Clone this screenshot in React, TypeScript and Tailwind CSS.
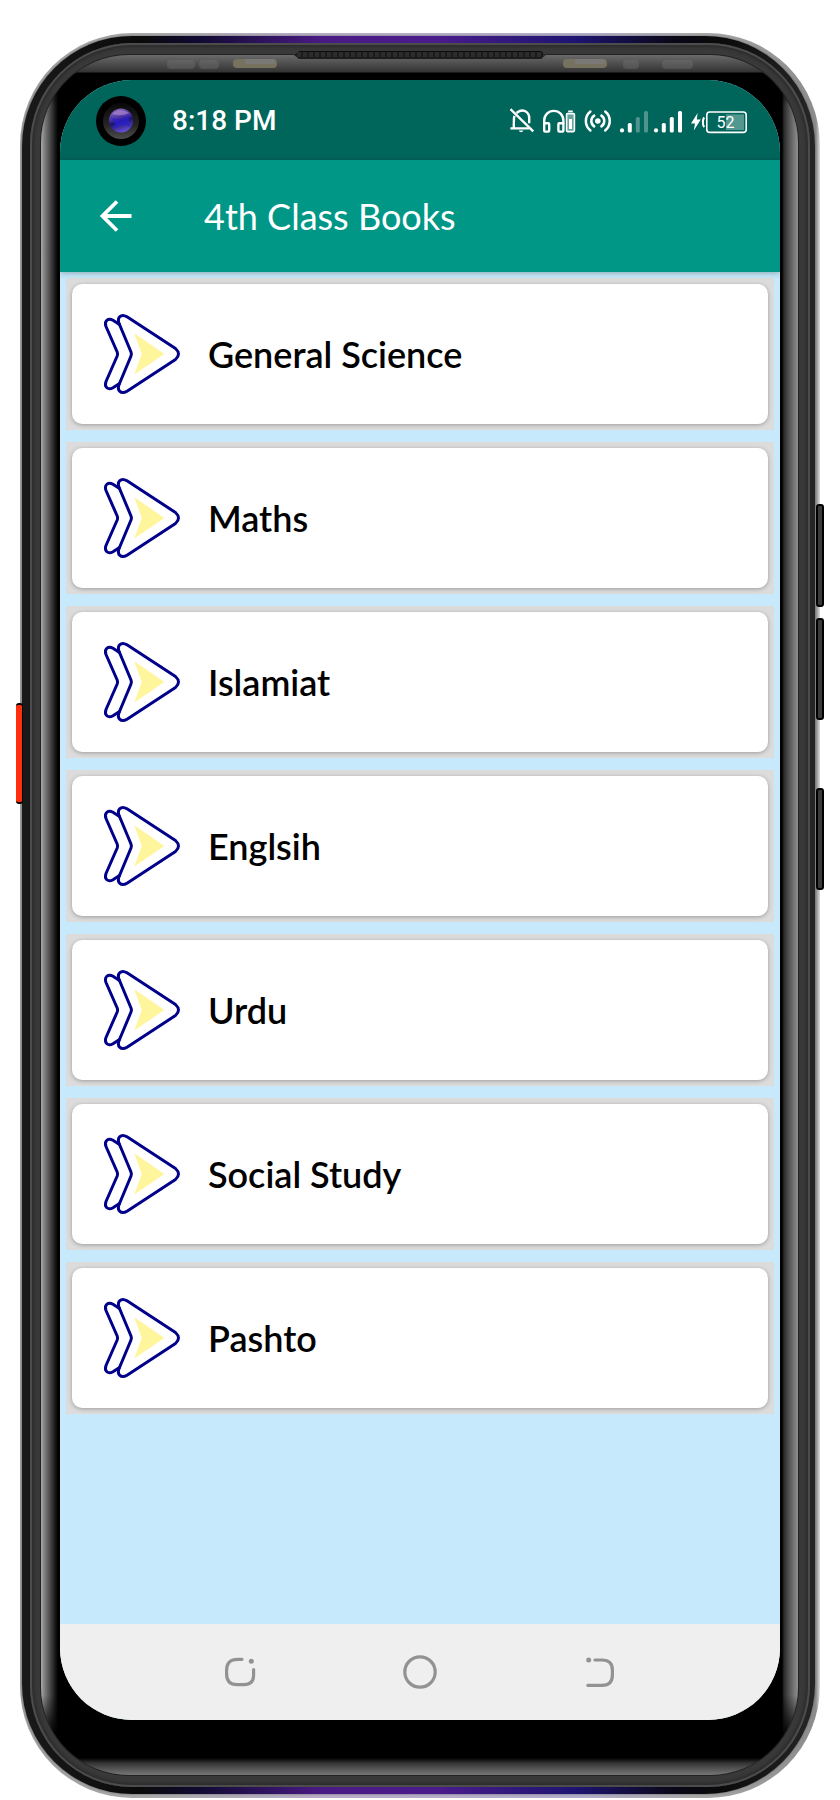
import { useState } from 'react';

const books = ['General Science', 'Maths', 'Islamiat', 'Englsih', 'Urdu', 'Social Study', 'Pashto'];

function BookArrow() {
  return (
    <svg width="80" height="84" viewBox="0 0 80 84" fill="none" aria-hidden="true" className="shrink-0">
      <g stroke="#00008b" strokeWidth="3" strokeLinejoin="round" strokeLinecap="round">
        <path d="M17.5 12.5 L11 8.3 C6 5.4 2 9 4 14.5 L15.2 40 Q16 42 15.2 44 L4 69.5 C2 75 6 78.6 11 75.7 L17.5 71.5" />
        <path d="M29 40 L17.3 12 C14.5 5.5 19 1.2 25 4.8 L73.5 36.5 Q79.5 42 73.5 47.5 L25 79.2 C19 82.8 14.5 78.5 17.3 72 L29 44 Q29.8 42 29 40 Z" />
      </g>
      <path d="M32.3 21.2 L62.3 42 L32.3 62.6 L39.7 42 Z" fill="#fff59d" />
    </svg>
  );
}

function StatusIcons() {
  return (
    <div className="flex items-center gap-[7px] text-white">
      {/* Muted bell */}
      <svg width="26" height="28" viewBox="0 0 26 28" fill="none" stroke="currentColor" strokeWidth="2.4" strokeLinecap="square" aria-hidden="true">
        <path d="M5.2 10 C4.8 11.5 4.8 13 4.8 21 M2.6 21.4 H19 M8.5 5.2 C14 1 20.2 5 20.2 11 V15" />
        <path d="M2.4 3 L23.4 23.6" />
        <path d="M9.8 23.6 H14.4 A2.4 2.4 0 0 1 9.8 23.6 Z" fill="currentColor" stroke="none" />
      </svg>
      {/* Headphones with battery */}
      <svg width="35" height="28" viewBox="0 0 35 28" fill="none" stroke="currentColor" aria-hidden="true">
        <path d="M2.2 17 V13.5 A9.6 9.6 0 0 1 21.4 13.5 V17" strokeWidth="2.4" />
        <rect x="2.2" y="16.2" width="5" height="8.4" rx="1" strokeWidth="2.4" />
        <rect x="16.4" y="16.2" width="5" height="8.4" rx="1" strokeWidth="2.4" />
        <rect x="24.6" y="6.6" width="7.8" height="18" rx="1" strokeWidth="1.6" fill="#ffffff" fillOpacity="0.4" />
        <rect x="27" y="12" width="3" height="10" fill="currentColor" stroke="none" />
        <path d="M26.2 4.4 H30.8" strokeWidth="1.6" />
      </svg>
      {/* Hotspot */}
      <svg width="28" height="28" viewBox="0 0 28 28" fill="none" stroke="currentColor" strokeWidth="2.5" strokeLinecap="round" aria-hidden="true">
        <circle cx="13.8" cy="14" r="2.8" fill="currentColor" stroke="none" />
        <path d="M10.2 8.6 A6.5 6.5 0 0 0 10.2 19.4 M17.4 8.6 A6.5 6.5 0 0 1 17.4 19.4" />
        <path d="M6.4 4.6 A12 12 0 0 0 6.4 23.4 M21.2 4.6 A12 12 0 0 1 21.2 23.4" />
      </svg>
      {/* Signal of both SIM cards */}
      <svg width="64" height="28" viewBox="0 0 64 28" fill="currentColor" aria-hidden="true">
        <circle cx="3" cy="23.4" r="2.1" />
        <rect x="8.8" y="16" width="4" height="9.4" rx="1.5" />
        <g opacity="0.3">
          <rect x="16.8" y="10" width="4" height="15.4" rx="1.5" />
          <rect x="25" y="4" width="4" height="21.4" rx="1.5" />
        </g>
        <circle cx="37" cy="23.4" r="2.1" />
        <rect x="42.8" y="16" width="4" height="9.4" rx="1.5" />
        <rect x="50.8" y="10" width="4" height="15.4" rx="1.5" />
        <rect x="59" y="4" width="4" height="21.4" rx="1.5" />
      </svg>
      {/* Charging battery */}
      <svg width="58" height="28" viewBox="0 0 58 28" fill="none">
        <path d="M7.6 6 L1 16.4 H5 L3.8 23.6 L10.8 12.6 H6.8 Z" fill="currentColor" />
        <path d="M14.4 10.6 C12.4 12 12.4 18.6 14.4 20" stroke="currentColor" strokeWidth="2" />
        <rect x="16.8" y="5" width="39.4" height="20.4" rx="3" stroke="currentColor" strokeWidth="1.6" />
        <rect x="36" y="7.4" width="18" height="15.6" fill="#ffffff" fillOpacity="0.32" />
        <text x="35.5" y="21" textAnchor="middle" fill="currentColor" className="font-['Roboto',sans-serif] text-[16px]">
          52
        </text>
      </svg>
    </div>
  );
}

function Camera() {
  return (
    <svg width="50" height="50" viewBox="0 0 50 50" aria-hidden="true">
      <defs>
        <linearGradient id="barrel" x1="0" y1="0" x2="0" y2="1">
          <stop offset="0" stopColor="#080808" />
          <stop offset="0.6" stopColor="#242424" />
          <stop offset="1" stopColor="#4c4c4c" />
        </linearGradient>
        <linearGradient id="lens" x1="0.3" y1="0" x2="0.6" y2="1">
          <stop offset="0" stopColor="#8a68b8" />
          <stop offset="0.35" stopColor="#5138a8" />
          <stop offset="0.55" stopColor="#1d1470" />
          <stop offset="1" stopColor="#6a52dc" />
        </linearGradient>
      </defs>
      <circle cx="25" cy="25" r="25" fill="#000" />
      <circle cx="25" cy="25" r="18" fill="url(#barrel)" />
      <circle cx="25" cy="24.6" r="12" fill="url(#lens)" />
      <path d="M14 21 Q22 26 34 19 Q31 26 35 31 Q26 26 18 33 Q21 26 14 21 Z" fill="#2b1fd0" opacity="0.75" />
      <path d="M16 18 Q24 11 33 17 Q25 21 16 18 Z" fill="#b48fd0" opacity="0.6" />
    </svg>
  );
}

function SpeakerStrip() {
  return (
    <svg width="560" height="20" viewBox="0 0 560 20" aria-hidden="true" className="pointer-events-none absolute top-[17px] left-1/2 -translate-x-1/2">
      <defs>
        <pattern id="mesh" width="6" height="8" patternUnits="userSpaceOnUse">
          <rect width="6" height="8" fill="#1c1c1c" />
          <rect x="1" y="2" width="4" height="5" fill="#2c2c2c" />
        </pattern>
      </defs>
      <path d="M159 1 H401 L406 5 L401 9 H159 L154 5 Z" fill="url(#mesh)" />
      <path d="M159 1.5 H401" stroke="#0c0c0c" />
      <rect x="27" y="10" width="28" height="9" rx="4" fill="#777" opacity="0.35" />
      <rect x="59" y="10" width="20" height="9" rx="4" fill="#777" opacity="0.35" />
      <rect x="93" y="9" width="44" height="9" rx="4" fill="#77715f" />
      <rect x="105" y="9" width="30" height="5" rx="2" fill="#7c7c7c" opacity="0.8" />
      <rect x="423" y="9" width="44" height="9" rx="4" fill="#77715f" />
      <rect x="435" y="9" width="30" height="5" rx="2" fill="#7c7c7c" opacity="0.8" />
      <rect x="483" y="10" width="16" height="9" rx="4" fill="#777" opacity="0.35" />
      <rect x="522" y="10" width="31" height="9" rx="4" fill="#777" opacity="0.35" />
    </svg>
  );
}

export default function App() {
  const [selected, setSelected] = useState<string | null>(null);

  return (
    <main className="flex min-h-screen flex-col bg-white px-5 pt-[33px] pb-[2px]">
      {/* Phone body */}
      <div className="relative flex flex-1 flex-col rounded-[112px] bg-[linear-gradient(to_right,#a0a0a0_0,#a8a8a8_15%,#b8acc8_40%,#b0acc8_70%,#a8a8a8_85%,#8c8c8c_calc(100%-4px),#dcdcdc_100%)] pt-[3px] pr-[5px] pb-[4px] pl-[2px]">
        <div className="absolute top-[670px] -left-1 h-[101px] w-[7px] rounded-[3px] border-y-2 border-r border-black bg-[#ff2e0c]" />
        <div className="absolute top-[471px] -right-1 h-[103px] w-[8px] rounded-[3px] border-2 border-black bg-[#3a3a3a]" />
        <div className="absolute top-[585px] -right-1 h-[102px] w-[8px] rounded-[3px] border-2 border-black bg-[#3a3a3a]" />
        <div className="absolute top-[755px] -right-1 h-[102px] w-[8px] rounded-[3px] border-2 border-black bg-[#3a3a3a]" />

        <div className="flex flex-1 flex-col rounded-[110px] bg-[linear-gradient(to_right,#1a1a1a_0,#0a0a0a_15%,#0f0a30_22%,#4a1a84_38%,#4a1c8a_52%,#1d1470_70%,#0a0818_82%,#0a0a0a_88%,#262626_100%)] pt-[7px] pr-[5px] pb-[7px] pl-[8px] shadow-[0_0_2px_#555]">
          <div className="flex flex-1 flex-col rounded-[102px] bg-[#393939] pt-[12px] pr-[12px] pb-[12px] pl-[11px] shadow-[inset_0_0_0_2px_#4c4c4c,inset_0_0_3px_4px_#2c2c2c]">
            <div className="flex flex-1 flex-col rounded-[88px] bg-[linear-gradient(to_bottom,#6a6a6a_0,#333_17px,#000_18px,#000_25px,transparent_50px,transparent_calc(100%-80px),#000_calc(100%-36px),#000_calc(100%-17px),#333_calc(100%-12px),#777_100%),linear-gradient(to_right,#a8a8a8_0,#7a7a7a_4px,#4a4a4a_9px,#1a1a1a_14px,#000_17px,#000_calc(100%-16px),#2a2a2a_calc(100%-14px),#5a5a5a_calc(100%-8px),#909090_100%)] pt-[25px] pr-[18px] pb-[55px] pl-[19px] shadow-[0_0_0_1px_#222]">
              {/* Screen */}
              <div className="flex flex-1 flex-col overflow-hidden rounded-[72px] bg-[#c6eafb]">
                <div className="flex h-20 items-center bg-[#00665c] pt-0.5 pr-8 pl-9">
                  <Camera />
                  <span className="ml-[26px] font-['Roboto',sans-serif] text-[28px] leading-8 font-medium text-white">8:18 PM</span>
                  <div className="ml-auto">
                    <StatusIcons />
                  </div>
                </div>

                <header className="relative flex h-28 items-center bg-[#009787] pl-9 shadow-[0_1px_6px_rgba(0,0,0,0.3)]">
                  <button type="button" aria-label="Back" className="flex size-10 items-center justify-center text-white">
                    <svg width="32" height="32" viewBox="0 0 32 32" fill="none" stroke="currentColor" strokeWidth="3.8" aria-hidden="true">
                      <path d="M31.5 16 H3 M17 1.5 L2.5 16 L17 30.5" />
                    </svg>
                  </button>
                  <h1 className="ml-[68px] font-['Lato',sans-serif] text-[36px] leading-10 text-white">4th Class Books</h1>
                </header>

                {/* Book list */}
                <ul className="flex flex-1 flex-col gap-3 px-1.5 pt-1.5 pb-3">
                  {books.map((book) => (
                    <li key={book} className="bg-[#dcdcdc] p-1.5">
                      <button
                        type="button"
                        onClick={() => setSelected(book)}
                        aria-pressed={selected === book}
                        className="flex h-[140px] w-full items-center gap-[26px] rounded-[10px] bg-white pl-[30px] text-left shadow-[0_1px_4px_rgba(0,0,0,0.3)]"
                      >
                        <BookArrow />
                        <span className="font-['Lato',sans-serif] text-[36px] leading-10 font-semibold text-black">{book}</span>
                      </button>
                    </li>
                  ))}
                </ul>

                {/* System navigation */}
                <nav className="grid h-24 grid-cols-3 items-center justify-items-center bg-[#efefef] px-[90px] text-[#929292]">
                  <button type="button" aria-label="Recent apps">
                    <svg width="36" height="36" viewBox="0 0 36 36" fill="none" stroke="currentColor" strokeWidth="3.2" strokeLinecap="round">
                      <path d="M20 5.3 H16 C8 5.3 4.6 9 4.6 16 V20 C4.6 27.5 8 30.6 15 30.6 H22 C28.5 30.6 31.6 27 31.6 21 V15.5" />
                      <circle cx="29.3" cy="7.3" r="2.5" fill="currentColor" stroke="none" />
                    </svg>
                  </button>
                  <button type="button" aria-label="Home">
                    <svg width="36" height="36" viewBox="0 0 36 36" fill="none" stroke="currentColor" strokeWidth="3.2">
                      <circle cx="18" cy="18" r="15.2" />
                    </svg>
                  </button>
                  <button type="button" aria-label="Previous">
                    <svg width="36" height="36" viewBox="0 0 36 36" fill="none" stroke="currentColor" strokeWidth="3.2" strokeLinecap="round">
                      <path d="M13 6 H20 C27 6 30.4 9.5 30.4 16 V21 C30.4 28 27 31.3 20 31.3 H5.8" />
                      <circle cx="6.7" cy="6" r="2.5" fill="currentColor" stroke="none" />
                    </svg>
                  </button>
                </nav>
              </div>
            </div>
          </div>
        </div>
        <SpeakerStrip />
      </div>
    </main>
  );
}
